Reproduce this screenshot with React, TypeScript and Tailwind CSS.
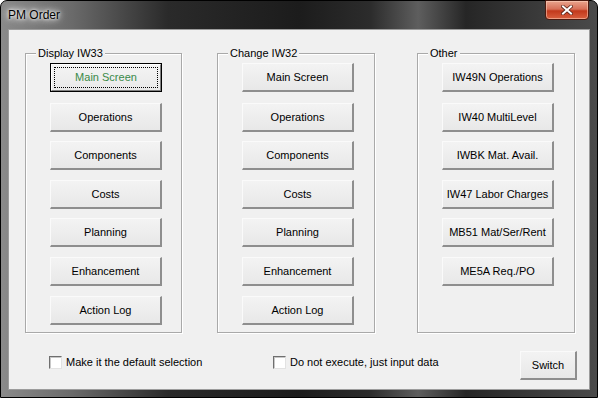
import React from "react";

const font = { fontFamily: '"Liberation Sans", Arial, sans-serif' };

function WinButton({ label, focused = false, w = "w-[112px]", extra = "" }: { label: string; focused?: boolean; w?: string; extra?: string }) {
  if (focused) {
    return (
      <div className={`${w} ${extra} h-[29px] border border-black`}>
        <div className="h-full w-full border-t border-l border-t-white border-l-white border-r border-b border-r-[#808080] border-b-[#808080] bg-gradient-to-b from-[#f4f4f4] to-[#e9e9e9] p-[2px]">
          <div className="flex h-full w-full items-center justify-center border border-dotted border-black text-[11px] leading-none text-[#3a8a48]">
            {label}
          </div>
        </div>
      </div>
    );
  }
  return (
    <div
      className={`${w} ${extra} h-[29px] flex items-center justify-center border-t border-l border-t-[#fafafa] border-l-[#fafafa] border-r-2 border-b-2 border-r-[#8e8e8e] border-b-[#8e8e8e] bg-gradient-to-b from-[#f3f3f3] to-[#e8e8e8] text-[11px] leading-none text-black`}
    >
      {label}
    </div>
  );
}

const gaps = ["mt-0", "mt-[11px]", "mt-[9px]", "mt-[10px]", "mt-[9px]", "mt-[10px]", "mt-[10px]"];

function Group({ title, items, focusFirst = false, w }: { title: string; items: string[]; focusFirst?: boolean; w: string }) {
  return (
    <div className={`relative ${w} h-[280px] border border-[#a9a9a9] shadow-[inset_1px_1px_0_#ffffff,1px_1px_0_#ffffff]`}>
      <div className="absolute -top-[7px] left-[10px] bg-[#f0f0f0] px-[2px] text-[11px] leading-[13px] text-black">{title}</div>
      <div className="flex flex-col pl-[24px] pt-[9px]">
        {items.map((it, i) => (
          <WinButton key={it} label={it} focused={focusFirst && i === 0} extra={gaps[i]} />
        ))}
      </div>
    </div>
  );
}

function CheckBox({ label }: { label: string }) {
  return (
    <div className="flex items-center">
      <div className="h-[13px] w-[13px] border-t border-l border-t-[#6f6f6f] border-l-[#6f6f6f] border-r border-b border-r-[#e2e2e2] border-b-[#e2e2e2] bg-white shadow-[inset_1px_1px_0_#c8c8c8]" />
      <span className="ml-[4px] text-[11px] leading-none text-black">{label}</span>
    </div>
  );
}

export default function App() {
  const list = ["Main Screen", "Operations", "Components", "Costs", "Planning", "Enhancement", "Action Log"];
  const other = ["IW49N Operations", "IW40 MultiLevel", "IWBK Mat. Avail.", "IW47 Labor Charges", "MB51 Mat/Ser/Rent", "ME5A Req./PO"];
  return (
    <div style={font} className="h-[398px] w-[598px] overflow-hidden">
      <div className="flex h-full w-full flex-col rounded-t-[7px] border border-black bg-[linear-gradient(90deg,#8a8a8a_0%,#6a6a6a_12%,#2a2a2a_28%,#1c1c1c_50%,#2c2c2c_62%,#5e5e5e_70%,#262626_78%,#3a3a3a_90%,#4a4a4a_100%)]">
        {/* title bar */}
        <div className="relative flex h-[28px] shrink-0 items-center">
          <span className="ml-[7px] text-[12px] leading-none text-black [text-shadow:0_0_6px_#ffffff,0_0_10px_#ffffff,0_0_3px_#ffffff]">
            PM Order
          </span>
          <div className="absolute right-[8px] -top-[1px] flex h-[20px] w-[44px] items-center justify-center rounded-b-[4px] border border-[#4a1a10] bg-[linear-gradient(180deg,#e9a48e_0%,#d77058_45%,#c2391c_55%,#d9603f_100%)] shadow-[inset_0_0_0_1px_rgba(255,220,200,0.5)]">
            <svg width="12" height="10" viewBox="0 0 12 10">
              <path d="M2 1.5 L10 8.5 M10 1.5 L2 8.5" stroke="#5a2418" strokeWidth="3.6" strokeLinecap="square" />
              <path d="M2 1.5 L10 8.5 M10 1.5 L2 8.5" stroke="#ffffff" strokeWidth="2" strokeLinecap="square" />
            </svg>
          </div>
        </div>
        {/* body */}
        <div className="flex flex-1 px-[7px] pb-[7px]">
          <div className="flex flex-1 flex-col bg-[#f0f0f0] shadow-[inset_0_0_0_1px_#9c9c9c]">
            <div className="mt-[24px] flex pl-[17px]">
              <Group title="Display IW33" items={list} focusFirst w="w-[157px]" />
              <div className="ml-[35px]">
                <Group title="Change IW32" items={list} w="w-[158px]" />
              </div>
              <div className="ml-[42px]">
                <Group title="Other" items={other} w="w-[158px]" />
              </div>
            </div>
            <div className="mt-[18px] flex h-[28px] items-start">
              <div className="ml-[41px] mt-[5px] w-[224px]">
                <CheckBox label="Make it the default selection" />
              </div>
              <div className="mt-[5px] flex-1">
                <CheckBox label="Do not execute, just input data" />
              </div>
              <div className="mr-[13px]">
                <WinButton label="Switch" w="w-[57px]" />
              </div>
            </div>
          </div>
        </div>
      </div>
    </div>
  );
}
